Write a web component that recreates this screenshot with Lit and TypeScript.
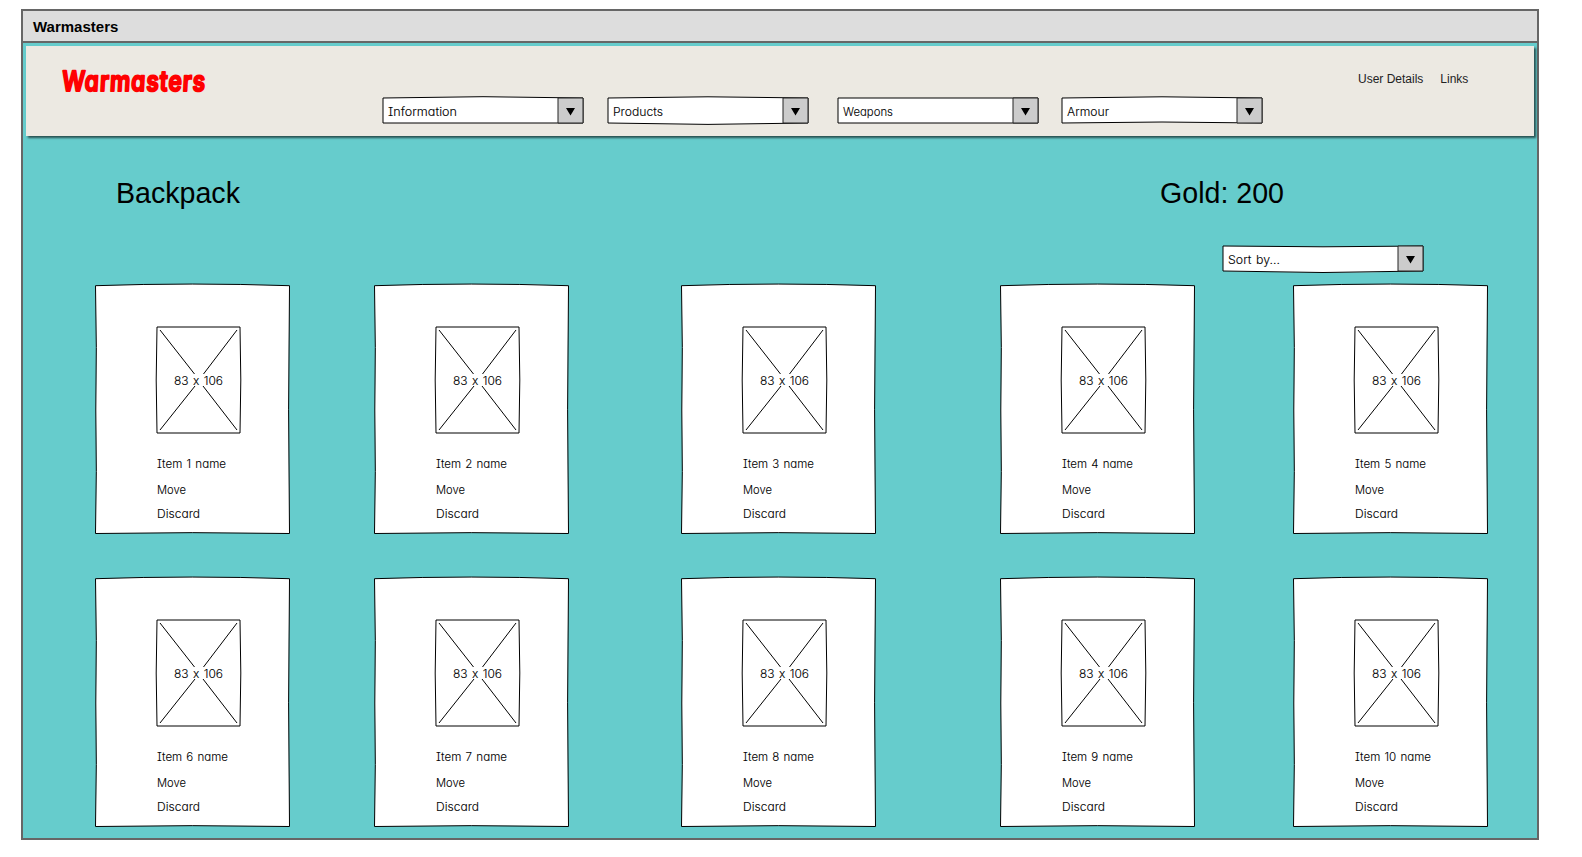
import { LitElement, html, css } from "lit";
import { customElement, property } from "lit/decorators.js";

/** A line of handwritten-style text, fitted to a given width. */
@customElement("hand-text")
class HandText extends LitElement {
  @property() text = "";
  @property({ type: Number }) width = 50;
  static styles = css`
    :host { display: block; height: 16px; }
    svg { display: block; overflow: visible; }
    text {
      font: 300 12px Inter, "Open Sans", sans-serif;
      font-feature-settings: "cv11", "cv08", "ss03", "calt" 0;
      word-spacing: 1px;
      fill: #000; stroke: #000; stroke-width: 0.1;
    }
  `;
  render() {
    return html`<svg width=${this.width} height="16">
      <text x="0" y="12" textLength=${this.width} lengthAdjust="spacingAndGlyphs">${this.text}</text>
    </svg>`;
  }
}

/** Dropdown with slightly bowed top and bottom edges. */
@customElement("sketch-select")
class SketchSelect extends LitElement {
  @property() label = "";
  @property({ type: Number }) textWidth = 50;
  @property({ type: Number }) top = 0;
  @property({ type: Number }) bottom = 0;
  static styles = css`
    :host { display: block; position: relative; width: 200px; height: 25px; }
    svg { position: absolute; left: 0; top: 0; overflow: visible; }
    hand-text { position: relative; padding: 6px 0 0 5px; }
    .box { fill: #fff; stroke: #000; stroke-width: 1; stroke-linejoin: round; }
    .button { fill: #ccc; stroke: #222; stroke-width: 1; stroke-linejoin: round; }
  `;
  render() {
    return html`
      <svg width="200" height="25">
        <path class="box" d="M0 0Q100 ${this.top * 2} 200 0V25Q100 ${25 + this.bottom * 2} 0 25Z" />
        <path class="button" d="M175 0H200V25H175Z" />
        <path d="M183 10H192L187.5 17.4Z" />
      </svg>
      <hand-text .text=${this.label} .width=${this.textWidth}></hand-text>
    `;
  }
}

@customElement("item-card")
class ItemCard extends LitElement {
  @property() name = "";
  @property({ type: Number }) nameWidth = 70;
  static styles = css`
    :host { display: block; position: relative; width: 195px; height: 249px; }
    .frame { position: absolute; left: 0; top: 0; overflow: visible; }
    .paper { fill: #fff; stroke: #000; stroke-width: 1; stroke-linejoin: round; }
    .body { position: relative; padding: 42px 0 0 62px; display: flex; flex-direction: column; }
    .picture { position: relative; width: 83px; height: 106px; display: grid; place-items: center; }
    .picture svg { position: absolute; left: 0; top: 0; overflow: visible; }
    .picture hand-text { position: relative; padding-top: 2px; }
    .line { fill: none; stroke: #000; stroke-width: 1; stroke-linejoin: round; }
    .name { margin-top: 23px; }
    .move { margin-top: 10px; }
    .discard { margin-top: 8px; }
  `;
  render() {
    return html`
      <svg class="frame" width="195" height="249">
        <path class="paper" d="M.5 .7Q97 -2.6 194.5 .7Q192.7 125 194.5 248.5Q97 246.8 .5 248.5Q2 186 .8 125Q2 62 .5 .7Z" />
      </svg>
      <div class="body">
        <div class="picture">
          <svg width="83" height="106">
            <path class="line" d="M0 0H83Q84.6 53 83 106H0Q-1.6 53 0 0Z" />
            <path class="line" d="M3 3L37.5 47M80 3L46.5 47M38 59L3 103M46 59L80 103" />
          </svg>
          <hand-text .text=${"83 x 106"} .width=${49}></hand-text>
        </div>
        <hand-text class="name" .text=${this.name} .width=${this.nameWidth}></hand-text>
        <hand-text class="move" .text=${"Move"} .width=${29}></hand-text>
        <hand-text class="discard" .text=${"Discard"} .width=${43}></hand-text>
      </div>
    `;
  }
}

const menus = [
  { label: "Information", w: 69, top: -1.3, bottom: 0 },
  { label: "Products", w: 50, top: -1.2, bottom: 1.4 },
  { label: "Weapons", w: 50, top: 0, bottom: 0 },
  { label: "Armour", w: 42, top: -1.2, bottom: -1 },
];
const nameWidths = [69, 71, 71, 71, 71, 71, 71, 71, 71, 76];

@customElement("app-root")
class AppRoot extends LitElement {
  static styles = css`
    :host {
      display: block; box-sizing: border-box; width: 1582px; height: 857px;
      padding: 9px 43px 17px 21px; background: #fff; color: #000;
      font-family: "Liberation Sans", Arial, sans-serif; overflow: hidden;
    }
    .window { box-sizing: border-box; height: 831px; border: 2px solid #666; background: #66cccc; }
    .title {
      box-sizing: border-box; height: 32px; padding-left: 10px; background: #ddd;
      border-bottom: 2px solid #666; font-weight: 700; font-size: 15px; line-height: 31px;
    }
    .header {
      box-sizing: border-box; height: 90px; margin: 3px; background: #ece9e2;
      box-shadow: 2px 2px 2px rgba(0, 0, 0, 0.6);
      display: grid; grid-template-columns: 357px 879px 1fr; align-items: start;
    }
    .logo { display: block; margin: 16px 0 0 35px; overflow: visible; }
    .logo text {
      font: 600 28px Inter, "Open Sans", sans-serif; font-feature-settings: "cv11";
      fill: #f00; stroke: #f00; stroke-width: 2; stroke-linejoin: round;
    }
    .menus { padding-top: 52px; display: grid; grid-template-columns: 225px 230px 224px 200px; }
    .links { display: flex; gap: 17px; padding: 25px 0 0 96px; font-size: 12px; line-height: 16px; white-space: nowrap; color: #222; }
    .summary { display: flex; justify-content: space-between; margin: 39px 253px 0 93px; font-size: 28.6px; line-height: 36px; }
    .sort { margin: 35px 0 0 1200px; }
    .items { display: grid; grid-template-columns: 279px 307px 319px 293px 195px; row-gap: 44px; margin: 14px 0 0 72px; }
  `;
  render() {
    return html`
      <div class="window">
        <div class="title">Warmasters</div>
        <header class="header">
          <svg class="logo" width="145" height="36">
            <g transform="translate(.4 28.8) skewX(-3) scale(.81 1)">
              <text textLength="177" lengthAdjust="spacing">Warmasters</text>
            </g>
          </svg>
          <nav class="menus">
            ${menus.map((m) => html`<sketch-select .label=${m.label} .textWidth=${m.w} .top=${m.top} .bottom=${m.bottom}></sketch-select>`)}
          </nav>
          <div class="links"><span>User Details</span><span>Links</span></div>
        </header>
        <div class="summary"><span>Backpack</span><span>Gold: 200</span></div>
        <sketch-select class="sort" .label=${"Sort by..."} .textWidth=${52} .top=${0.8} .bottom=${1.5}></sketch-select>
        <main class="items">
          ${nameWidths.map((w, i) => html`<item-card .name=${`Item ${i + 1} name`} .nameWidth=${w}></item-card>`)}
        </main>
      </div>
    `;
  }
}
